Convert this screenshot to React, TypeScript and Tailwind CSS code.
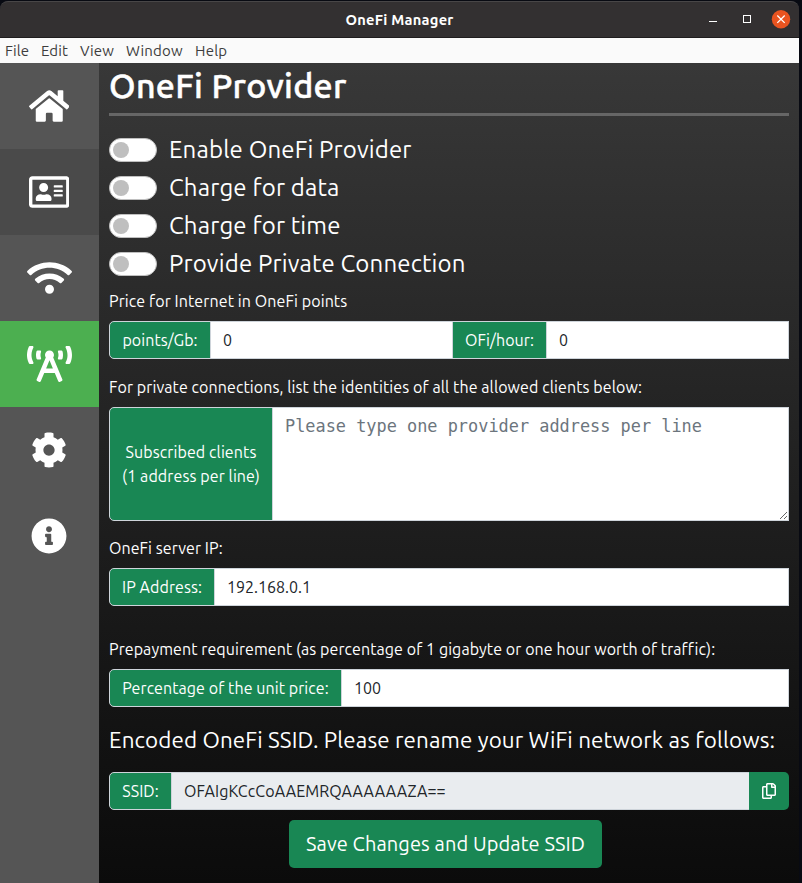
import type { ReactNode } from "react";
import { FaHome, FaRegAddressCard, FaWifi, FaBroadcastTower, FaCog, FaInfoCircle, FaRegCopy } from "react-icons/fa";

const navItems = [
  { icon: FaHome, tone: "bg-[#555]", size: "w-[40.5px]" },
  { icon: FaRegAddressCard, tone: "bg-[#4a4a4a]", size: "w-[40.5px]" },
  { icon: FaWifi, tone: "bg-[#555]", size: "w-[45px]" },
  { icon: FaBroadcastTower, tone: "bg-[#4caf50]", size: "w-[45px]" },
  { icon: FaCog, tone: "bg-[#555]", size: "w-9" },
  { icon: FaInfoCircle, tone: "bg-[#555]", size: "w-9" },
];

const switches = ["Enable OneFi Provider", "Charge for data", "Charge for time", "Provide Private Connection"];

function TitleBar() {
  return (
    <header className="relative flex h-[37px] shrink-0 items-start justify-end rounded-t-lg border-t border-b border-t-[#484647] border-b-[#1f1d1e] bg-[#333031] pt-2 pr-2 text-white">
      <span className="absolute inset-x-0 top-[7px] text-center text-[14.67px] leading-[22px] font-bold tracking-[0.25px]">OneFi Manager</span>
      <svg width="84" height="20" viewBox="0 0 84 20" fill="none" className="relative">
        <path d="M2 11.5h8" stroke="white" />
        <rect x="36.5" y="5.5" width="7" height="7" stroke="white" />
        <circle cx="74" cy="9.2" r="9.2" fill="#e95420" />
        <path d="M70.3 5.5l7.4 7.4M77.7 5.5l-7.4 7.4" stroke="white" strokeWidth="1.3" />
      </svg>
    </header>
  );
}

function MenuBar() {
  return (
    <nav className="flex h-[25px] shrink-0 bg-[#fafafa] pl-[5px] text-[15px] leading-[25px] text-[#3d3d3d]">
      <span className="w-9">File</span>
      <span className="w-[39px]">Edit</span>
      <span className="w-[46px]">View</span>
      <span className="w-[69px] tracking-[0.2px]">Window</span>
      <span className="tracking-[0.2px]">Help</span>
    </nav>
  );
}

function Addon({ children, className = "" }: { children: ReactNode; className?: string }) {
  return (
    <div className={`flex shrink-0 items-center justify-center border border-[#ced4da] bg-[#198754] text-center leading-6 text-white ${className}`}>
      {children}
    </div>
  );
}

function Field({ value, className = "" }: { value: string; className?: string }) {
  return (
    <input
      readOnly
      value={value}
      className={`-ml-px h-[38px] min-w-0 border border-[#ced4da] px-3 text-[#212529] outline-none ${className}`}
    />
  );
}

export default function App() {
  return (
    <div className="flex h-[883px] w-[802px] flex-col overflow-hidden bg-[#080a12] pt-px pr-[3px] font-[Ubuntu,'Noto_Sans',sans-serif] text-[16px] tracking-[0.073px]">
      <TitleBar />
      <MenuBar />
      <div className="flex min-h-0 flex-1">
        <aside className="w-[99px] shrink-0 bg-[#555] text-white">
          {navItems.map(({ icon: Icon, tone, size }, i) => (
            <div key={i} className={`flex h-[86px] items-center justify-center pr-px ${tone}`}>
              <Icon className={`h-9 ${size}`} />
            </div>
          ))}
        </aside>
        <main className="flex-1 bg-linear-to-b from-[#383838] to-[#0b0b0b] px-[10px] text-white">
          <h1 className="h-[50px] text-[34px] leading-[44px] font-medium tracking-[0.34px] [-webkit-text-stroke:0.5px_white]">OneFi Provider</h1>
          <div className="h-[3px] bg-[#666]" />

          <div className="mt-[15px]">
            {switches.map((label) => (
              <label key={label} className="flex h-[38px] items-center gap-3 text-[24px] leading-[38px] tracking-[0.15px]">
                <span className="flex h-6 w-12 items-center rounded-full border border-[#bfbfbf] bg-white pl-[3px]">
                  <span className="size-4 rounded-full bg-[#bfbfbf]" />
                </span>
                {label}
              </label>
            ))}
          </div>

          <p className="mt-[6px] h-6 leading-6 tracking-[0.1px]">Price for Internet in OneFi points</p>
          <div className="mt-2 flex h-[38px]">
            <Addon className="w-[102px] rounded-l-[5px]">points/Gb:</Addon>
            <Field value="0" className="w-[243px] bg-white" />
            <Addon className="-ml-px w-[95px]">OFi/hour:</Addon>
            <Field value="0" className="flex-1 bg-white" />
          </div>

          <p className="mt-4 h-6 leading-6 tracking-[0.09px]">
            For private connections, list the identities of all the allowed clients below:
          </p>
          <div className="mt-2 flex h-[114px]">
            <Addon className="w-[164px] rounded-l-[5px] tracking-[0.1px]">
              <span>
                Subscribed clients
                <br />
                (1 address per line)
              </span>
            </Addon>
            <textarea
              readOnly
              placeholder="Please type one provider address per line"
              className="-ml-px h-[114px] min-w-0 flex-1 resize border border-[#ced4da] bg-white px-3 py-1.5 font-['DejaVu_Sans_Mono',monospace] text-[16.9px] leading-6 tracking-normal outline-none placeholder:text-[#6c757d]"
            />
          </div>

          <p className="mt-[15px] h-6 leading-6">OneFi server IP:</p>
          <div className="mt-2 flex h-[38px]">
            <Addon className="w-[106px] rounded-l-[5px]">IP Address:</Addon>
            <Field value="192.168.0.1" className="flex-1 bg-white tracking-normal" />
          </div>

          <p className="mt-[31px] h-6 leading-6">
            Prepayment requirement (as percentage of 1 gigabyte or one hour worth of traffic):
          </p>
          <div className="mt-2 flex h-[38px]">
            <Addon className="w-[233px] rounded-l-[5px]">Percentage of the unit price:</Addon>
            <Field value="100" className="flex-1 bg-white tracking-normal" />
          </div>

          <h2 className="mt-[17px] h-8 text-[22.4px] leading-8 tracking-[0.12px] whitespace-nowrap">
            Encoded OneFi SSID. Please rename your WiFi network as follows:
          </h2>
          <div className="mt-4 flex h-[38px]">
            <Addon className="w-[63px] rounded-l-[5px]">SSID:</Addon>
            <Field value="OFAIgKCcCoAAEMRQAAAAAAZA==" className="flex-1 bg-[#e9ecef] tracking-[0.1px]" />
            <button className="-ml-px flex w-10 shrink-0 items-center justify-center rounded-r-[5px] bg-[#198754] text-white">
              <FaRegCopy size={16} />
            </button>
          </div>

          <div className="mt-[10px] flex justify-center pr-[7px]">
            <button className="h-12 w-[313px] rounded-[5px] bg-[#198754] text-[20px] tracking-[0.1px] whitespace-nowrap text-white">
              Save Changes and Update SSID
            </button>
          </div>
        </main>
      </div>
    </div>
  );
}
